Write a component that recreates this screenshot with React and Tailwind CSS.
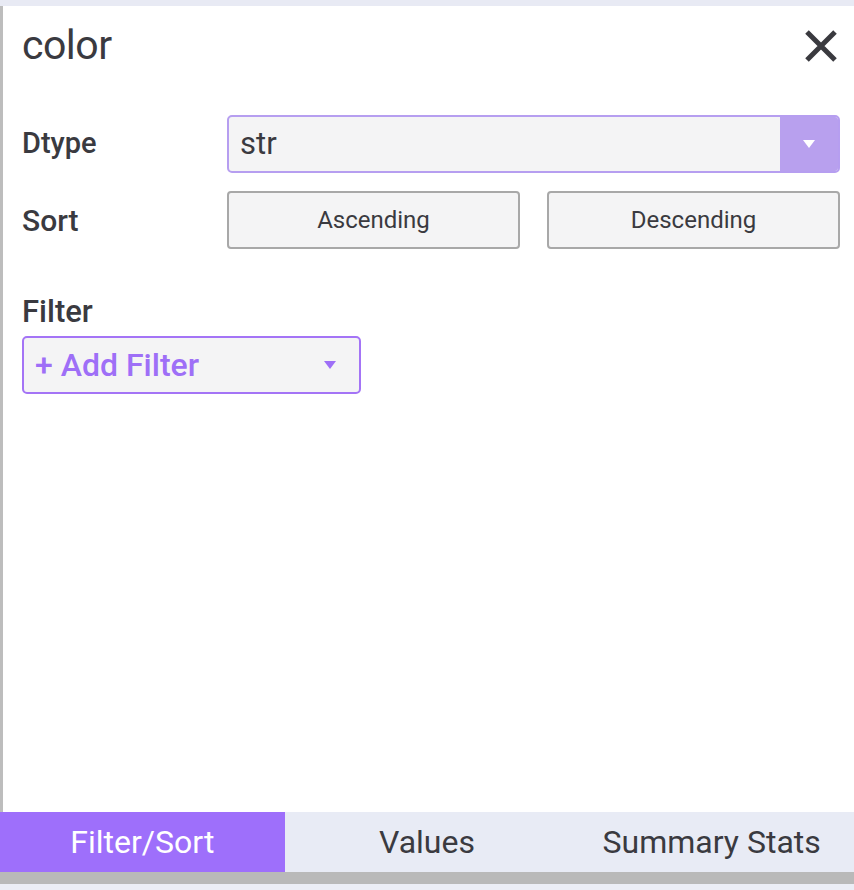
import React from "react";

const font = { fontFamily: "Roboto, 'Noto Sans', sans-serif" };

function CloseIcon() {
  return (
    <svg width="34" height="34" viewBox="0 0 34 34" fill="none">
      <path d="M3 3L31 31M31 3L3 31" stroke="#3a3a3f" strokeWidth="5" strokeLinecap="butt" />
    </svg>
  );
}

function Caret({ className }) {
  return (
    <svg width="12" height="8" viewBox="0 0 12 8" className={className}>
      <path d="M0 0H12L6 8Z" fill="currentColor" />
    </svg>
  );
}

const tabs = ["Filter/Sort", "Values", "Summary Stats"];

export default function App() {
  return (
    <div className="flex h-[890px] w-[854px] flex-col bg-white text-[#3a3a40]" style={font}>
      {/* clipped top nav strip */}
      <div className="relative h-[6px] overflow-hidden bg-[#e8eaf4]">
        <div className="absolute bottom-[-10px] left-0 flex w-full text-[15px] uppercase tracking-wide text-[#555]">
          <span className="absolute left-[540px]">Steps</span>
          <span className="absolute left-[654px]">Docs</span>
          <span className="absolute left-[743px]">Fullscreen</span>
        </div>
      </div>

      <div className="flex flex-1 flex-col border-l-[3px] border-[#bdbdbd] pl-[19px] pr-[14px]">
        <div className="flex h-[78px] items-center justify-between pt-[1px]">
          <h1 className="text-[41px] leading-none tracking-[-0.5px]">color</h1>
          <button className="mr-[2px] flex h-[34px] w-[34px] items-center justify-center">
            <CloseIcon />
          </button>
        </div>

        <div className="mt-[31px] flex items-center">
          <div className="w-[205px] text-[29px] font-medium">Dtype</div>
          <div className="flex h-[58px] flex-1 overflow-hidden rounded-[5px] border-2 border-[#b69ef0] bg-[#f4f4f5]">
            <div className="flex flex-1 items-center pl-[11px] text-[31px]">str</div>
            <div className="flex w-[58px] items-center justify-center bg-[#b8a0ee] text-white">
              <Caret />
            </div>
          </div>
        </div>

        <div className="mt-[18px] flex items-center">
          <div className="w-[205px] text-[30px] font-medium">Sort</div>
          <div className="grid flex-1 grid-cols-2 gap-[27px]">
            <button className="h-[58px] rounded-[4px] border-2 border-[#a8a8a8] bg-[#f4f4f5] text-[24px]">
              Ascending
            </button>
            <button className="h-[58px] rounded-[4px] border-2 border-[#a8a8a8] bg-[#f4f4f5] text-[24px]">
              Descending
            </button>
          </div>
        </div>

        <div className="mt-[47px] text-[31px] font-medium leading-none">Filter</div>
        <button className="mt-[9px] flex h-[58px] w-[339px] items-center justify-between rounded-[5px] border-2 border-[#a474f6] bg-[#f4f4f5] pl-[11px] pr-[23px] text-[32px] font-medium text-[#9e6ff7]">
          <span>+ Add Filter</span>
          <Caret className="text-[#9e6ff7]" />
        </button>
      </div>

      <div className="grid h-[60px] grid-cols-3 bg-[#e8ebf5] text-[32px]">
        {tabs.map((t, i) => (
          <div
            key={t}
            className={
              i === 0
                ? "flex items-center justify-center bg-[#9e6ffb] text-white"
                : "flex items-center justify-center"
            }
          >
            {t}
          </div>
        ))}
      </div>
      <div className="h-[12px] bg-[#b9b9b9]" />
      <div className="h-[6px] bg-[#eceef6]" />
    </div>
  );
}
